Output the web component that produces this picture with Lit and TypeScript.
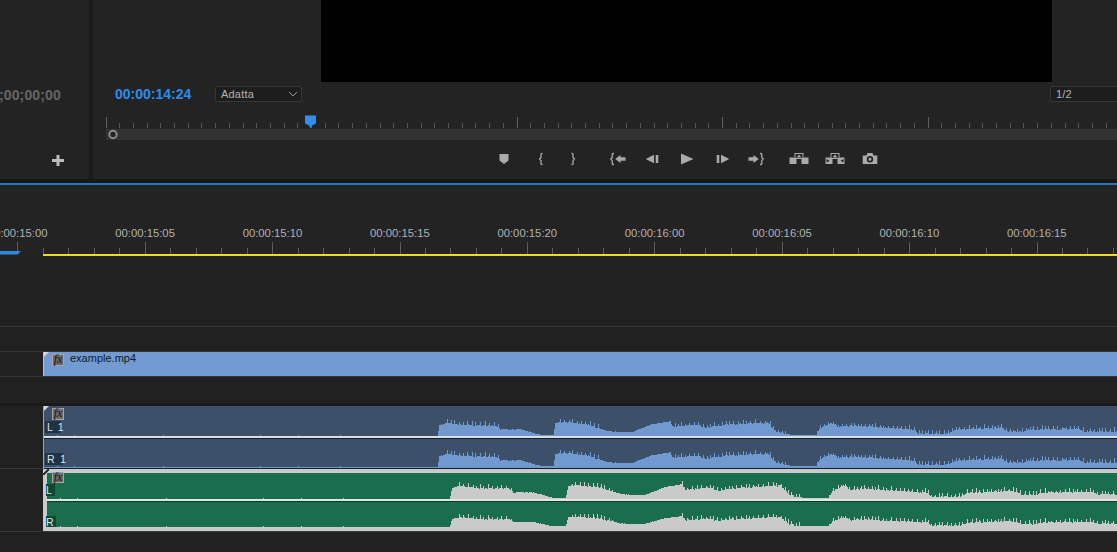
import { LitElement, html, css, svg } from "lit";
import { customElement } from "lit/decorators.js";

const ENV: [number, number][] = [
  [436,0.5],[438,11],[447,14],[457,12],[495,11],[500,7],[520,7],[540,1],[552,1],[554,13],[562,15],[587,12],[607,5],[630,4],
  [650,12],[668,15],[672,10],[697,12],[703,9],[723,12],[767,14],[775,5],[790,1],[815,1],[818,8],[830,14],[837,10],[850,11],
  [913,7],[917,3],[947,3],[953,7],[1000,9],[1007,5],[1023,5],[1027,7],[1077,8],[1083,5],[1130,6],
];

function env(x: number): number {
  if (x < ENV[0][0]) return 0;
  for (let i = 1; i < ENV.length; i++) {
    const [x0, h0] = ENV[i - 1];
    const [x1, h1] = ENV[i];
    if (x <= x1) return h0 + ((h1 - h0) * (x - x0)) / (x1 - x0);
  }
  return 5;
}

function noise(x: number): number {
  const s = Math.sin(x * 12.9898) * 43758.5453;
  return s - Math.floor(s);
}

function wavePath(height: number, shift: number, scale: number): string {
  let d = `M0 ${height}`;
  let next = 0;
  for (let px = 0; px < 1074; px++) {
    const x = px + 43 - shift;
    const e = env(x);
    let h = e * scale;
    const spiky = (x > 445 && x < 500) || (x > 558 && x < 600) || x > 668;
    if (e > 2 && spiky) {
      if (px >= next) {
        h += 1 + noise(x) * 2.5;
        next = px + 3 + Math.floor(noise(px + 7) * 3);
      } else {
        h -= noise(x) * 1.4;
      }
    } else if (e > 2) {
      h -= noise(x) * 0.6;
    }
    if (e < 1.2 && noise(px) > 0.985) h = 1;
    d += `H${px}V${Math.round(height - Math.max(0, h))}`;
  }
  return d + `H1074V${height}Z`;
}

const braceL = "M8 2.500H7q-.8 0-.8 1v3L4.800 8l1.400 1.500v3q0 1 .8 1h1";
const braceR = "M16 2.500h1q.8 0 .8 1v3L19.200 8l-1.400 1.500v3q0 1-.8 1h-1";

const TRANSPORT: { x: number; icon: ReturnType<typeof svg> }[] = [
  { x: 503.5, icon: svg`<path d="M7.500 3h9v6.500l-4.500 3.500-4.500-3.500z"/>` },
  { x: 540.5, icon: svg`<path fill="none" stroke="currentColor" stroke-width="1.300" d="M13.500 2.500h-.7q-.8 0-.8 1v3L10.600 8 12 9.500v3q0 1 .8 1h.7"/>` },
  { x: 572.5, icon: svg`<path fill="none" stroke="currentColor" stroke-width="1.300" d="M10.500 2.500h.7q.8 0 .8 1v3L13.400 8 12 9.500v3q0 1-.8 1h-.7"/>` },
  { x: 617.5, icon: svg`<path fill="none" stroke="currentColor" stroke-width="1.300" d=${braceL}/><path d="M9.200 8l5.300-4v2.300h5v3.400h-5V12z"/>` },
  { x: 652, icon: svg`<path d="M5.700 8L14 3.800v8.400zM15.700 4h2.600v8h-2.600z"/>` },
  { x: 687, icon: svg`<path d="M6 2.500L18.500 8 6 13.500z"/>` },
  { x: 723, icon: svg`<path d="M18.300 8L10 3.800v8.400zM8.300 4H5.700v8h2.600z"/>` },
  { x: 756, icon: svg`<path fill="none" stroke="currentColor" stroke-width="1.300" d=${braceR}/><path d="M14.800 8l-5.300-4v2.300h-5v3.400h5V12z"/>` },
  { x: 799, icon: svg`<path fill-rule="evenodd" d="M7.500 2h9v4.500h5V13h-7V8h-5v5h-7V6.500h5zM8.500 3v4h7V3zM12 3.500l2.500 3h-5z"/>` },
  { x: 834.5, icon: svg`<path fill-rule="evenodd" d="M7.500 2h9v4.500h5V13h-7V8h-5v5h-7V6.500h5zM8.500 3v4h7V3zM12 3.500l2.500 3h-5zM3.500 8v3.500L6.500 9.700zM20.500 8v3.500L17.500 9.700z"/>` },
  { x: 870, icon: svg`<path fill-rule="evenodd" d="M4.700 4.500h3.800l1-2.500h5l1 2.500h3.800V13H4.700zM12 5a3.200 3.200 0 100 6.400A3.200 3.200 0 0012 5zm0 1.700a1.500 1.500 0 110 3 1.500 1.500 0 010-3z"/>` },
];

const LABELS = ["00:00:15:00","00:00:15:05","00:00:15:10","00:00:15:15","00:00:15:20","00:00:16:00","00:00:16:05","00:00:16:10","00:00:16:15"];

@customElement("app-root")
export class AppRoot extends LitElement {
  static styles = css`
    :host { display: block; width: 1117px; height: 552px; overflow: hidden; background: #212121; font-family: "Liberation Sans", Arial, sans-serif; }
    .top { display: flex; height: 179px; background: #232323; }
    .side { width: 89px; display: flex; flex-direction: column; flex: none; }
    .side-tc { width: 61px; height: 16px; margin-top: 87px; overflow: hidden; display: flex; justify-content: flex-end; font: bold 14px/16px "Liberation Sans", sans-serif; letter-spacing: .15px; color: #666; white-space: nowrap; }
    .plus { margin: 52px 0 0 52px; width: 12px; height: 11px; display: block; }
    .vsep { width: 4px; flex: none; background: #1a1a1a; }
    .monitor { flex: 1; min-width: 0; display: flex; flex-direction: column; }
    .video { width: 731px; height: 82px; margin-left: 228px; background: #000; flex: none; }
    .tcrow { display: flex; align-items: center; height: 16px; margin-top: 4px; position: relative; }
    .tc { font: bold 14px/16px "Liberation Sans", sans-serif; color: #2d8ceb; margin-left: 22px; width: 100px; }
    .select { box-sizing: border-box; height: 16px; background: #1d1d1d; border: 1px solid #373737; border-radius: 2px; font-size: 11px; line-height: 14px; color: #b4b4b4; letter-spacing: .2px; padding-left: 5px; display: flex; align-items: center; justify-content: space-between; }
    .fit { width: 87px; padding-right: 3px; }
    .res { width: 100px; margin-left: auto; margin-right: -33px; flex: none; }
    .spacer { flex: 1; }
    .scrub { display: block; margin-top: 13px; margin-left: 13px; flex: none; }
    .transport { display: flex; height: 16px; margin-top: 10px; color: #aaa; }
    .transport svg { width: 24px; height: 16px; flex: none; fill: currentColor; display: block; }
    .strip { height: 4px; background: #181818; }
    .blue { height: 2px; background: #2a72c4; }
    .ruler { position: relative; height: 71px; background: #232323; overflow: hidden; }
    .labels { display: flex; padding-top: 41px; margin-left: -46px; height: 14px; font-size: 11.3px; line-height: 14px; color: #b2b2b2; white-space: nowrap; }
    .labels span { flex: none; width: 127.4px; text-align: center; }
    .ticks { display: block; }
    .yellow { height: 2px; margin-left: 43px; background: #e8dc28; }
    .inpoint { position: absolute; left: 0; top: 66px; width: 21px; height: 3.5px; background: #2f87e0; clip-path: polygon(0 0, 100% 0, 85% 100%, 0 100%); }
    .row { box-sizing: border-box; display: flex; border-bottom: 1px solid #353535; background: #212121; }
    .gutter { width: 43px; flex: none; }
    .r1 { height: 71px; }
    .r2 { height: 25px; }
    .r3 { height: 25px; }
    .r4 { height: 29px; border-bottom: 3px solid #1a1a1a; }
    .r5 { height: 63px; }
    .r6 { height: 63px; }
    .clip { position: relative; flex: 1; min-width: 0; overflow: hidden; }
    .v1 { background: #729bd2; border-left: 1px solid #b4c6de; }
    .a1 { background: #3c5069; border-left: 1px solid #9aa4b0; display: flex; flex-direction: column; margin-bottom: -1px; }
    .a2 { background: #1a6e4e; border: 4px solid #cacaca; border-right: 0; display: flex; flex-direction: column; overflow: visible; }
    .chan { display: block; flex: none; }
    .div-a1 { height: 2px; background: #d8dde2; box-shadow: 0 1px 0 #14202c; margin-bottom: 1px; flex: none; }
    .bot-a1 { height: 1px; background: #7097cd; flex: none; box-shadow: 0 1px 0 #14202c; margin-bottom: 1px; }
    .div-a2 { height: 2px; background: #e0e8e4; box-shadow: 0 1px 0 #0c3a28; margin-bottom: 1px; flex: none; }
    .corner { position: absolute; left: 0; top: 0; width: 5px; height: 5px; background: #d8d8d8; clip-path: polygon(0 0, 100% 0, 0 100%); }
    .corner.dark { left: -4px; top: -4px; width: 6px; height: 6px; background: linear-gradient(135deg, #cacaca 40%, #333 40%, #333 62%, transparent 62%); clip-path: none; }
    .fx { position: absolute; left: 8px; top: 2px; box-sizing: border-box; width: 12px; height: 12px; background: #6a6a6a; border: 1px solid #a5a5a5; color: #161616; font: italic 12px/9px "Liberation Serif", serif; text-align: center; }
    .a2 .fx { left: 5px; top: -1px; height: 11px; }
    .name { position: absolute; left: 26px; top: -1px; font-size: 11px; line-height: 14px; color: #101a28; }
    .tag { position: absolute; box-sizing: border-box; height: 12px; font-size: 10.500px; line-height: 12px; color: #dfe5ea; background: #1f3347; letter-spacing: 1.200px; white-space: nowrap; padding-left: 2px; }
    .tl1 { left: 1px; top: 15px; width: 16px; }
    .tr1 { left: 1px; top: 47px; width: 18px; }
    .tag.g { background: #0e4a33; letter-spacing: 0; padding: 0; left: -1px; color: #e4e4e4; }
    .tl { top: 11px; width: 9px; }
    .tr { top: 43px; width: 10px; height: 11px; }
  `;

  private chan(h: number, shift: number, scale: number, color: string) {
    return html`<svg class="chan" width="1074" height=${h} viewBox="0 0 1074 ${h}">
      <path d=${wavePath(h, shift, scale)} fill=${color} shape-rendering="crispEdges"></path>
    </svg>`;
  }

  private scrub() {
    const ticks = [];
    for (let i = 0; i < 74; i++) {
      const x = i === 0 ? 0.5 : Math.round(-0.5 + i * 13.7) + 0.5;
      const major = i % 15 === 0;
      ticks.push(svg`<line x1=${x} x2=${x} y1=${major ? 2 : 8} y2="13" stroke=${major ? "#5e5e5e" : "#555"} />`);
    }
    return html`<svg class="scrub" width="1011" height="26" viewBox="0 0 1011 26">
      ${ticks}
      <rect x="0" y="14" width="1011" height="11" fill="#323232"></rect>
      <circle cx="7" cy="19.500" r="3.700" fill="#232323" stroke="#8c8c8c" stroke-width="2"></circle>
      <path d="M199 0.500h11v8l-4 2-1.500 3-1.500-3-4-2z" fill="#2f8fee"></path>
    </svg>`;
  }

  private rulerTicks() {
    const t = [];
    for (let i = 0; i < 46; i++) {
      const x = Math.round(17.3 + i * 25.48) + 0.5;
      const major = i % 5 === 0;
      t.push(svg`<line x1=${x} x2=${x} y1=${major ? 2 : 8} y2="14" stroke="#5c5c5c" />`);
    }
    return html`<svg class="ticks" width="1117" height="14" viewBox="0 0 1117 14">${t}</svg>`;
  }

  render() {
    let prev = 93;
    return html`
      <div class="top">
        <div class="side">
          <div class="side-tc">00;00;00;00</div>
          <svg class="plus" viewBox="0 0 12 11"><path d="M4.500 0h3v4H12v3H7.500v4h-3V7H0V4h4.500z" fill="#bdbdbd"></path></svg>
        </div>
        <div class="vsep"></div>
        <div class="monitor">
          <div class="video"></div>
          <div class="tcrow">
            <div class="tc">00:00:14:24</div>
            <div class="select fit">Adatta
              <svg width="10" height="6" viewBox="0 0 10 6"><path d="M1 1l4 4 4-4" fill="none" stroke="#9a9a9a"></path></svg>
            </div>
            <div class="spacer"></div>
            <div class="select res">1/2</div>
          </div>
          ${this.scrub()}
          <div class="transport">
            ${TRANSPORT.map((b) => {
              const m = b.x - 12 - prev;
              prev = b.x + 12;
              return html`<svg viewBox="0 0 24 16" style="margin-left:${m}px">${b.icon}</svg>`;
            })}
          </div>
        </div>
      </div>
      <div class="strip"></div>
      <div class="blue"></div>
      <div class="ruler">
        <div class="labels">${LABELS.map((l) => html`<span>${l}</span>`)}</div>
        ${this.rulerTicks()}
        <div class="yellow"></div>
        <div class="inpoint"></div>
      </div>
      <div class="row r1"></div>
      <div class="row r2"></div>
      <div class="row r3">
        <div class="gutter"></div>
        <div class="clip v1">
          <div class="corner"></div>
          <div class="fx">fx</div>
          <div class="name">example.mp4</div>
        </div>
      </div>
      <div class="row r4"></div>
      <div class="row r5">
        <div class="gutter"></div>
        <div class="clip a1">
          ${this.chan(30, 0, 1, "#7099cf")}
          <div class="div-a1"></div>
          ${this.chan(28, 0, 1, "#7099cf")}
          <div class="bot-a1"></div>
          <div class="corner"></div>
          <div class="fx">fx</div>
          <div class="tag tl1">L 1</div>
          <div class="tag tr1">R 1</div>
        </div>
      </div>
      <div class="row r6">
        <div class="gutter"></div>
        <div class="clip a2">
          ${this.chan(26, 9.5, 1, "#cacaca")}
          <div class="div-a2"></div>
          ${this.chan(25, 9.5, 0.75, "#cacaca")}
          <div class="corner dark"></div>
          <div class="fx">fx</div>
          <div class="tag g tl">L</div>
          <div class="tag g tr">R</div>
        </div>
      </div>
    `;
  }
}
